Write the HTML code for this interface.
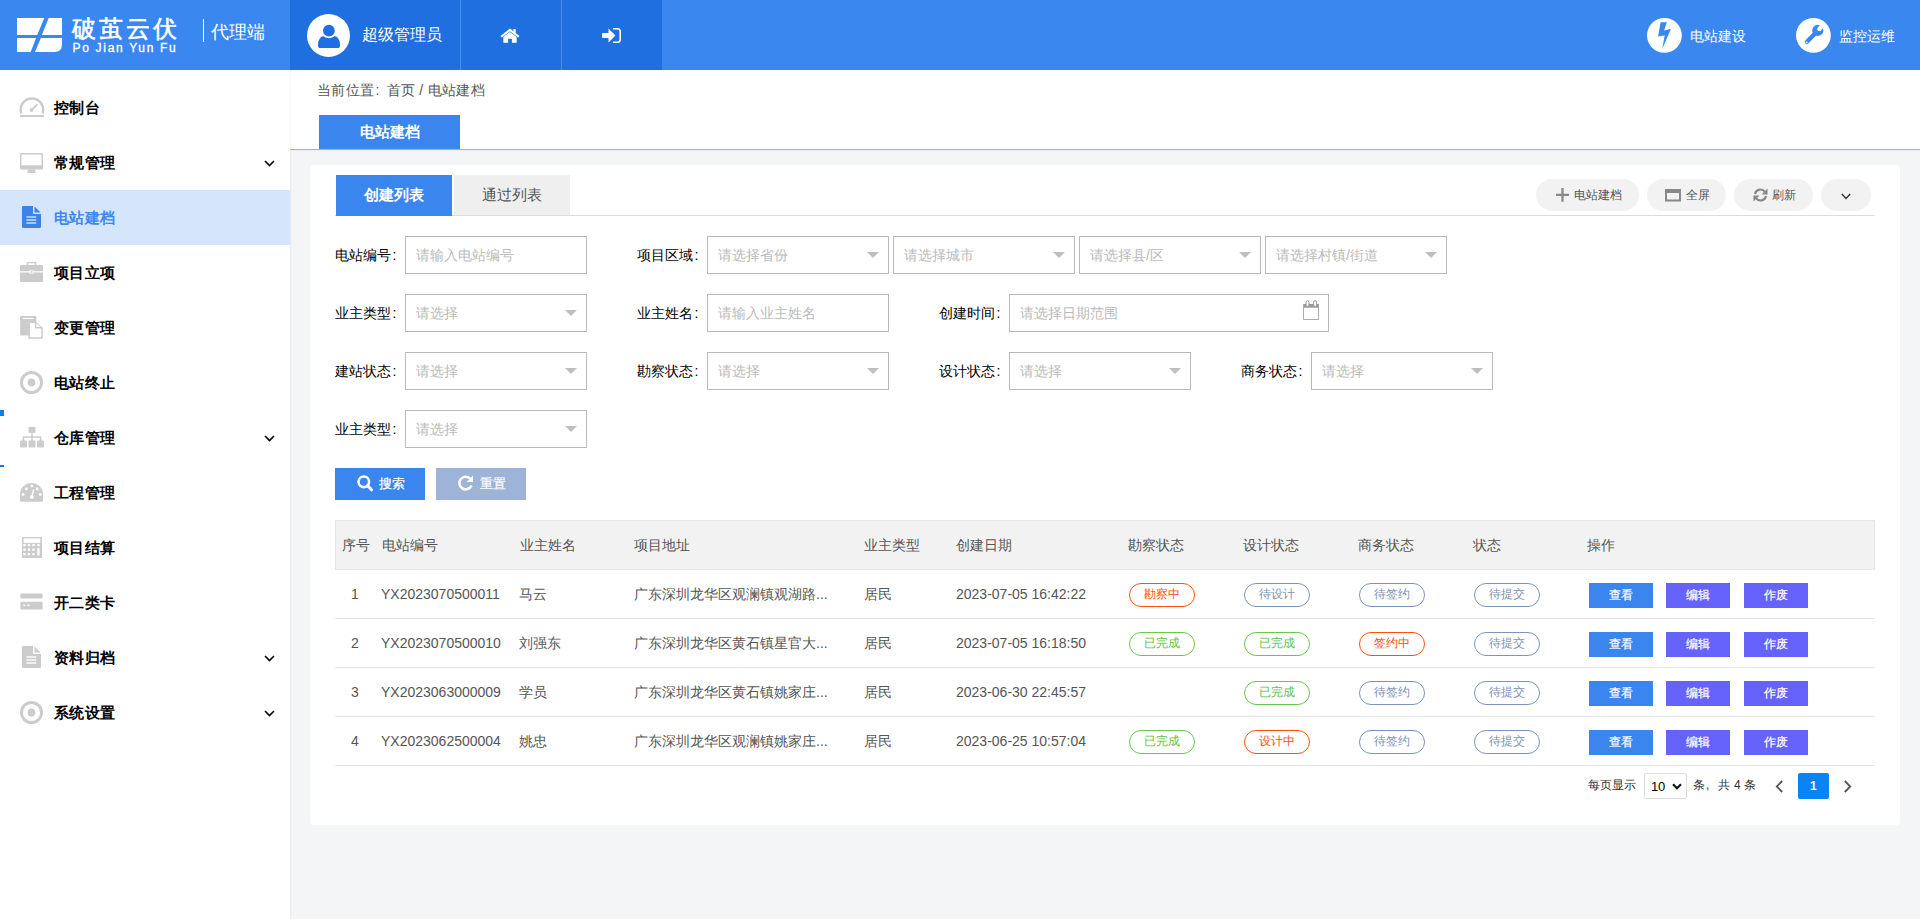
<!DOCTYPE html>
<html><head><meta charset="utf-8">
<style>
*{margin:0;padding:0;box-sizing:border-box}
html,body{width:1920px;height:919px;overflow:hidden;background:#f4f5f7;font-family:"Liberation Sans",sans-serif;font-size:14px;color:#333}
.a{position:absolute}
.t{position:absolute;white-space:nowrap;line-height:1}
/* header */
#hdr{left:0;top:0;width:1920px;height:70px;background:#3a88ef}
#usr{left:290px;top:0;width:372px;height:70px;background:#1f6fe0}
.sep{top:0;width:1px;height:70px;background:#4a8ae8}
/* sidebar */
#side{left:0;top:70px;width:290px;height:849px;background:#fff;border-right:none}
.mi{position:absolute;left:53.5px;font-size:15px;font-weight:bold;color:#000;line-height:1;white-space:nowrap;letter-spacing:0.6px}
.chev{position:absolute;left:264px;width:8px;height:8px;border-right:2px solid #333;border-bottom:2px solid #333;transform:rotate(45deg)}
/* main top */
#top{left:290px;top:70px;width:1630px;height:80px;background:#fff;border-bottom:1px solid #8cb8f0}
#card{left:310px;top:165px;width:1590px;height:660px;background:#fff;border-radius:4px}
.lbl i{font-style:normal;margin-left:1.5px}
.lbl{position:absolute;font-size:14px;color:#000;line-height:1;white-space:nowrap}
.inp{position:absolute;height:38px;border:1px solid #b9b9b9;background:#fff}
.ph{position:absolute;left:10px;top:11px;font-size:14px;color:#bbb;line-height:1;white-space:nowrap}
.car{position:absolute;right:9px;top:15px;width:0;height:0;border-left:6.5px solid transparent;border-right:6.5px solid transparent;border-top:6.5px solid #bfbfbf}
.pill{position:absolute;top:179px;height:31.5px;border-radius:16px;background:#f2f2f2;font-size:13px;color:#555}
/* table */
.th{position:absolute;top:538px;font-size:14px;color:#555;line-height:1;white-space:nowrap}
.td{position:absolute;font-size:14px;color:#555;line-height:1;white-space:nowrap}
.rl{position:absolute;left:335px;width:1540px;height:1px;background:#e6e6e6}
.bdg{position:absolute;width:66px;height:24px;border:1px solid #7d95ba;border-radius:12px;font-size:12px;color:#7d93b6;text-align:center;line-height:21px}
.bdg.r{border-color:#ff4f0a;color:#ff4f0a}
.bdg.g{border-color:#67c84a;color:#62c244}
.btn{position:absolute;width:64px;height:25px;background:#6563fc;color:#fff;font-size:12px;text-align:center;line-height:25px;-webkit-text-stroke:0.2px #fff}
.btn.b{background:#3a86ee}
</style></head><body>
<div id="hdr" class="a"></div>
<div id="usr" class="a"></div>
<div class="a sep" style="left:460px"></div>
<div class="a sep" style="left:561px"></div>


<!-- logo -->
<svg class="a" style="left:17px;top:18px" width="45" height="34" viewBox="0 0 45 34">
<path d="M0 0H27.3L20.2 17H0Z M31.7 0H45V17H24.8Z M0 20.1H19L13.7 34H0Z M23.9 20.1H45V26.5Q45 34 37.5 34H18Z" fill="#fff"/>
</svg>
<div class="t" style="left:72px;top:17px;font-size:24px;color:#fff;letter-spacing:3px;-webkit-text-stroke:0.6px #fff">破茧云伏</div>
<div class="t" style="left:72.5px;top:42px;font-size:12px;color:#fff;letter-spacing:1.7px;-webkit-text-stroke:0.3px #fff">Po Jian Yun Fu</div>
<div class="a" style="left:203px;top:19px;width:1px;height:23px;background:#fff"></div>
<div class="t" style="left:210.5px;top:23.5px;font-size:17.6px;color:#fff">代理端</div>
<!-- user -->
<svg class="a" style="left:307px;top:14px" width="43" height="43" viewBox="0 0 43 43">
<circle cx="21.5" cy="21.5" r="21.5" fill="#fff"/>
<circle cx="21.9" cy="16.7" r="5.9" fill="#1f6fe0"/>
<path d="M16.5 22.2Q19 24.3 21.9 24.3Q24.8 24.3 27.3 22.2Q29 22 30.5 23.5Q33 26.5 33 30V31.5Q33 34.1 30.5 34.1H13.5Q11 34.1 11 31.5V30Q11 26.5 13.5 23.5Q15 22 16.5 22.2Z" fill="#1f6fe0"/>
</svg>
<div class="t" style="left:362px;top:27px;font-size:16px;color:#fff">超级管理员</div>
<!-- home -->
<svg class="a" style="left:500px;top:27.7px" width="20" height="15.2" viewBox="0 0 21 17" preserveAspectRatio="none">
<path d="M10.5 0.5L0.5 9L2 10.5L10.5 3.5L19 10.5L20.5 9L16.5 5.6V1H14V3.5Z" fill="#fff"/>
<path d="M3.5 10L10.5 4.5L17.5 10V16.5H12.5V12H8.5V16.5H3.5Z" fill="#fff"/>
</svg>
<!-- sign in -->
<svg class="a" style="left:602px;top:27.9px" width="19" height="15" viewBox="0 0 19 15">
<path d="M1 5Q0 5 0 6V9Q0 10 1 10H6.5V14.5L13.5 7.5L6.5 0.5V5Z" fill="#fff"/>
<path d="M11 0.8H15.5Q18.2 0.8 18.2 3.5V11.5Q18.2 14.2 15.5 14.2H11" fill="none" stroke="#fff" stroke-width="1.6"/>
</svg>
<!-- right icons -->
<svg class="a" style="left:1647px;top:18px" width="35" height="35" viewBox="0 0 35 35">
<circle cx="17.4" cy="17.4" r="17.4" fill="#fff"/>
<path d="M13.6 4.2H19.9L17.1 12.6L23.9 11.1L15.2 31.1L17.7 17.6L11.1 18.6Z" fill="#3a88ef"/>
</svg>
<div class="t" style="left:1689.5px;top:29px;font-size:14px;color:#fff">电站建设</div>
<svg class="a" style="left:1796px;top:18px" width="35" height="35" viewBox="0 0 35 35">
<circle cx="17.4" cy="17.4" r="17.4" fill="#fff"/>
<circle cx="21.8" cy="12.4" r="5.6" fill="#3a88ef"/>
<path d="M20 14.5L11 23.8" stroke="#3a88ef" stroke-width="4.4" stroke-linecap="round"/>
<circle cx="23.4" cy="10.9" r="2.2" fill="#fff"/>
<path d="M22 9.5L25.5 5L29 8.5L24.8 12.3Z" fill="#fff"/>
<circle cx="10.7" cy="24.3" r="0.9" fill="#fff"/>
</svg>
<div class="t" style="left:1839px;top:29px;font-size:14px;color:#fff">监控运维</div>
<div id="side" class="a"></div>
<div class="a" style="left:290px;top:70px;width:1px;height:849px;background:#ebecef"></div>
<div class="a" style="left:291px;top:70px;width:1px;height:849px;background:#f0f1f4"></div>


<!-- sidebar -->
<div class="a" style="left:0;top:190px;width:290px;height:55px;background:#d5e5fb"></div>
<div class="a" style="left:0;top:410px;width:4px;height:6px;background:#0a7cf0"></div>
<div class="a" style="left:0;top:465px;width:4px;height:2px;background:#0a7cf0"></div>
<svg class="a" style="left:19px;top:96px" width="26" height="22" viewBox="0 0 26 22">
<path d="M2.3 17.5A11.25 11.25 0 1 1 23.5 17.5" fill="none" stroke="#cccccc" stroke-width="2.5"/>
<rect x="1" y="19" width="24" height="2" fill="#cccccc"/>
<path d="M12.6 14L17.8 8.9" stroke="#cccccc" stroke-width="2" stroke-linecap="round"/>
<circle cx="12.6" cy="14" r="1.9" fill="#cccccc"/>
</svg>
<div class="mi" style="top:100px">控制台</div>
<svg class="a" style="left:20px;top:153px" width="23" height="20" viewBox="0 0 23 20">
<path d="M1 0H22Q23 0 23 1V15.5Q23 16.5 22 16.5H1Q0 16.5 0 15.5V1Q0 0 1 0Z" fill="#cccccc"/>
<rect x="1.5" y="1.5" width="20" height="10.8" fill="#fff"/>
<path d="M7.8 16.5H15.2L15.6 20H7.4Z" fill="#cccccc"/>
</svg>
<div class="mi" style="top:155px">常规管理</div>
<svg class="a" style="left:264px;top:160px" width="11" height="7" viewBox="0 0 11 7"><path d="M1 1L5.5 5.5L10 1" fill="none" stroke="#000" stroke-width="1.6"/></svg>

<svg class="a" style="left:22px;top:206px" width="19" height="22" viewBox="0 0 19 22">
<path d="M1.2 0H11V6.7Q11 7.9 12.2 7.9H19V20.8Q19 22 17.8 22H1.2Q0 22 0 20.8V1.2Q0 0 1.2 0Z" fill="#3b82ea"/>
<path d="M12.5 0.4L18.6 6.5H12.5Z" fill="#3b82ea"/>
<rect x="4.4" y="10.3" width="9.8" height="1.4" fill="#d5e5fb"/>
<rect x="4.4" y="13.3" width="9.8" height="1.4" fill="#d5e5fb"/>
<rect x="4.4" y="16.3" width="9.8" height="1.4" fill="#d5e5fb"/>
</svg>

<div class="mi" style="top:210px;color:#3e88f0">电站建档</div>
<svg class="a" style="left:20px;top:262px" width="23" height="20" viewBox="0 0 23 20">
<path d="M7.5 3.5V1.2Q7.5 0.5 8.2 0.5H14.8Q15.5 0.5 15.5 1.2V3.5" fill="none" stroke="#cccccc" stroke-width="1.6"/>
<path d="M1 3H22Q23 3 23 4V9.2H0V4Q0 3 1 3Z" fill="#cccccc"/>
<path d="M0 10.6H23V19Q23 20 22 20H1Q0 20 0 19Z" fill="#cccccc"/>
<rect x="9.5" y="8.4" width="4" height="3.2" fill="#fff"/>
<rect x="10.5" y="9.3" width="2" height="1.4" fill="#cccccc"/>
</svg>
<div class="mi" style="top:265px">项目立项</div>
<svg class="a" style="left:16px;top:312px" width="32" height="30" viewBox="0 0 32 30">
<rect x="4.1" y="3.9" width="16.2" height="19.6" rx="0.8" fill="#cccccc"/>
<rect x="6.9" y="5.9" width="10.4" height="1.1" fill="#fff"/>
<path d="M12.4 9.5H19.8L26.8 15.7V26.8H12.4Z" fill="#cccccc"/>
<path d="M13.9 11H18.9V16.6H25.3V25.3H13.9Z" fill="#fff"/>
<path d="M20.3 11.4L24.8 15.1H20.3Z" fill="#fff"/>
</svg>
<div class="mi" style="top:320px">变更管理</div>
<svg class="a" style="left:20px;top:371px" width="23" height="23" viewBox="0 0 23 23">
<circle cx="11.5" cy="11.5" r="10.05" fill="none" stroke="#cccccc" stroke-width="2.9"/>
<circle cx="11.5" cy="11.5" r="3.9" fill="#cccccc"/>
</svg>

<div class="mi" style="top:375px">电站终止</div>
<svg class="a" style="left:20px;top:427px" width="24" height="21" viewBox="0 0 24 21">
<rect x="8.5" y="0" width="7" height="6" rx="1" fill="#cccccc"/>
<path d="M12 6V10M3.5 14V10H20.5V14M12 10V14" fill="none" stroke="#cccccc" stroke-width="1.5"/>
<rect x="0" y="13.5" width="7" height="7" rx="1" fill="#cccccc"/>
<rect x="8.5" y="13.5" width="7" height="7" rx="1" fill="#cccccc"/>
<rect x="17" y="13.5" width="7" height="7" rx="1" fill="#cccccc"/>
</svg>
<div class="mi" style="top:430px">仓库管理</div>
<svg class="a" style="left:264px;top:435px" width="11" height="7" viewBox="0 0 11 7"><path d="M1 1L5.5 5.5L10 1" fill="none" stroke="#000" stroke-width="1.6"/></svg>

<svg class="a" style="left:20px;top:483px" width="23" height="19" viewBox="0 0 23 19">
<path d="M0 11.5A11.5 11.5 0 0 1 23 11.5V17.5Q23 18.7 21.8 18.7H1.2Q0 18.7 0 17.5Z" fill="#cccccc"/>
<circle cx="3.1" cy="11.5" r="1.4" fill="#fff"/>
<circle cx="6.4" cy="6" r="1.4" fill="#fff"/>
<circle cx="11.8" cy="2.95" r="1.4" fill="#fff"/>
<circle cx="17.1" cy="6" r="1.4" fill="#fff"/>
<circle cx="20.2" cy="11.5" r="1.4" fill="#fff"/>
<circle cx="11.8" cy="14" r="2" fill="#fff"/>
<path d="M11.8 14L13.5 6.9" stroke="#fff" stroke-width="1.4" stroke-linecap="round"/>
</svg>
<div class="mi" style="top:485px">工程管理</div>
<svg class="a" style="left:21.5px;top:536.5px" width="20" height="21.5" viewBox="0 0 20 21.5">
<rect x="0" y="0" width="20" height="21.5" rx="1" fill="#cccccc"/>
<rect x="1.6" y="1.3" width="16.7" height="4.6" fill="#fff"/>
<g fill="#fff">
<rect x="1.3" y="6.9" width="2.3" height="2.3"/><rect x="5.8" y="6.9" width="2.3" height="2.3"/><rect x="10.4" y="6.9" width="2.3" height="2.3"/><rect x="15.3" y="6.9" width="2.3" height="2.3"/>
<rect x="1.3" y="11.5" width="2.3" height="2.3"/><rect x="5.8" y="11.5" width="2.3" height="2.3"/><rect x="10.4" y="11.5" width="2.3" height="2.3"/><rect x="15.3" y="11" width="2.3" height="7.5"/>
<rect x="1.3" y="16" width="2.3" height="2.3"/><rect x="5.8" y="16" width="2.3" height="2.3"/><rect x="10.4" y="16" width="2.3" height="2.3"/>
</g>
</svg>
<div class="mi" style="top:540px">项目结算</div>
<svg class="a" style="left:20px;top:593px" width="23" height="17" viewBox="0 0 23 17">
<rect x="0.4" y="0.6" width="22.2" height="4.9" rx="1" fill="#cccccc"/>
<rect x="0.4" y="8.7" width="22.2" height="7.9" rx="1" fill="#cccccc"/>
<rect x="3.1" y="11.7" width="2.3" height="1.2" fill="#fff"/>
<rect x="6.9" y="11.7" width="3.1" height="1.2" fill="#fff"/>
</svg>
<div class="mi" style="top:595px">开二类卡</div>
<svg class="a" style="left:22px;top:646px" width="19" height="22" viewBox="0 0 19 22">
<path d="M1.2 0H11V6.7Q11 7.9 12.2 7.9H19V20.8Q19 22 17.8 22H1.2Q0 22 0 20.8V1.2Q0 0 1.2 0Z" fill="#cccccc"/>
<path d="M12.5 0.4L18.6 6.5H12.5Z" fill="#cccccc"/>
<rect x="4.4" y="10.3" width="9.8" height="1.4" fill="#fff"/>
<rect x="4.4" y="13.3" width="9.8" height="1.4" fill="#fff"/>
<rect x="4.4" y="16.3" width="9.8" height="1.4" fill="#fff"/>
</svg>

<div class="mi" style="top:650px">资料归档</div>
<svg class="a" style="left:264px;top:655px" width="11" height="7" viewBox="0 0 11 7"><path d="M1 1L5.5 5.5L10 1" fill="none" stroke="#000" stroke-width="1.6"/></svg>

<svg class="a" style="left:20px;top:701px" width="23" height="23" viewBox="0 0 23 23">
<circle cx="11.5" cy="11.5" r="10.05" fill="none" stroke="#cccccc" stroke-width="2.9"/>
<circle cx="11.5" cy="11.5" r="3.9" fill="#cccccc"/>
</svg>

<div class="mi" style="top:705px">系统设置</div>
<svg class="a" style="left:264px;top:710px" width="11" height="7" viewBox="0 0 11 7"><path d="M1 1L5.5 5.5L10 1" fill="none" stroke="#000" stroke-width="1.6"/></svg>

<div id="top" class="a"></div>
<div class="a" style="left:290px;top:70px;width:2px;height:79px;background:linear-gradient(90deg,#f6f6f6,#fff)"></div>
<div class="a" style="left:290px;top:150px;width:1630px;height:1px;background:#ececea"></div>
<!-- breadcrumb -->
<div class="t" style="left:316.8px;top:83px;font-size:14px;color:#555;letter-spacing:0.5px">当前位置</div><div class="t" style="left:375.5px;top:83px;font-size:14px;color:#555">:</div><div class="t" style="left:386.5px;top:83px;font-size:14px;color:#555;letter-spacing:0.3px">首页 / 电站建档</div>
<div class="a" style="left:319px;top:115px;width:141px;height:34px;background:#3a86ee"></div>
<div class="t" style="left:360px;top:124px;font-size:15px;color:#fff;font-weight:bold">电站建档</div>

<div id="card" class="a"></div>
<!-- inner tabs -->
<div class="a" style="left:335px;top:215px;width:1540px;height:1px;background:#dcdcdc"></div>
<div class="a" style="left:336px;top:175px;width:116px;height:41px;background:#3a86ee"></div>
<div class="t" style="left:364px;top:187px;font-size:15px;color:#fff;font-weight:bold">创建列表</div>
<div class="a" style="left:454px;top:175px;width:116px;height:40px;background:#efefef"></div>
<div class="t" style="left:482px;top:187px;font-size:15px;color:#555">通过列表</div>
<!-- toolbar -->
<div class="pill" style="left:1536px;width:102.5px"></div>
<div class="pill" style="left:1647px;width:79px"></div>
<div class="pill" style="left:1734px;width:79px"></div>
<div class="pill" style="left:1821px;width:50px"></div>
<svg class="a" style="left:1555.5px;top:188.2px" width="13" height="13.7" viewBox="0 0 13 13.7"><path d="M5.35 0H7.65V5.7H13V8H7.65V13.7H5.35V8H0V5.7H5.35Z" fill="#888"/></svg>
<div class="t" style="left:1574px;top:189px;font-size:12.4px;color:#555">电站建档</div>
<svg class="a" style="left:1665px;top:189px" width="16" height="12.5" viewBox="0 0 16 12.5"><rect x="1" y="1" width="14" height="10.5" fill="none" stroke="#888" stroke-width="2"/><rect x="1" y="1" width="14" height="3" fill="#888"/></svg>
<div class="t" style="left:1685.5px;top:189px;font-size:12.4px;color:#555">全屏</div>
<svg class="a" style="left:1752.5px;top:188px" width="15" height="14" viewBox="0 0 15 14"><path d="M2 6A5.5 5.5 0 0 1 12 4" fill="none" stroke="#888" stroke-width="2.2"/><path d="M14.5 0.5V6.5H8.5Z" fill="#888"/><path d="M13 8A5.5 5.5 0 0 1 3 10" fill="none" stroke="#888" stroke-width="2.2"/><path d="M0.5 13.5V7.5H6.5Z" fill="#888"/></svg>
<div class="t" style="left:1772px;top:189px;font-size:12.4px;color:#555">刷新</div>
<svg class="a" style="left:1840.5px;top:192.5px" width="10" height="7" viewBox="0 0 10 7"><path d="M0.8 1L5 5.5L9.2 1" fill="none" stroke="#333" stroke-width="1.4"/></svg>
<!-- form -->
<div class="lbl" style="left:335px;top:248px">电站编号<i>:</i></div>
<div class="inp" style="left:405px;top:236px;width:182px"><div class="ph">请输入电站编号</div></div>

<div class="lbl" style="left:637px;top:248px">项目区域<i>:</i></div>
<div class="inp" style="left:707px;top:236px;width:182px"><div class="ph">请选择省份</div><div class="car"></div></div>
<div class="inp" style="left:893px;top:236px;width:182px"><div class="ph">请选择城市</div><div class="car"></div></div>
<div class="inp" style="left:1079px;top:236px;width:182px"><div class="ph">请选择县/区</div><div class="car"></div></div>
<div class="inp" style="left:1265px;top:236px;width:182px"><div class="ph">请选择村镇/街道</div><div class="car"></div></div>

<div class="lbl" style="left:335px;top:306px">业主类型<i>:</i></div>
<div class="inp" style="left:405px;top:294px;width:182px"><div class="ph">请选择</div><div class="car"></div></div>

<div class="lbl" style="left:637px;top:306px">业主姓名<i>:</i></div>
<div class="inp" style="left:707px;top:294px;width:182px"><div class="ph">请输入业主姓名</div></div>

<div class="lbl" style="left:939px;top:306px">创建时间<i>:</i></div>
<div class="inp" style="left:1009px;top:294px;width:320px"><div class="ph">请选择日期范围</div></div>

<svg class="a" style="left:1303px;top:300px" width="16" height="20" viewBox="0 0 16 20"><rect x="0.2" y="4" width="15.7" height="15.8" fill="#999"/><rect x="1" y="7.7" width="14.1" height="11.3" fill="#fff"/><rect x="3" y="0.7" width="3" height="5.8" rx="1.5" fill="#fff" stroke="#999" stroke-width="1"/><rect x="10.6" y="0.7" width="3" height="5.8" rx="1.5" fill="#fff" stroke="#999" stroke-width="1"/></svg>
<div class="lbl" style="left:335px;top:364px">建站状态<i>:</i></div>
<div class="inp" style="left:405px;top:352px;width:182px"><div class="ph">请选择</div><div class="car"></div></div>

<div class="lbl" style="left:637px;top:364px">勘察状态<i>:</i></div>
<div class="inp" style="left:707px;top:352px;width:182px"><div class="ph">请选择</div><div class="car"></div></div>

<div class="lbl" style="left:939px;top:364px">设计状态<i>:</i></div>
<div class="inp" style="left:1009px;top:352px;width:182px"><div class="ph">请选择</div><div class="car"></div></div>

<div class="lbl" style="left:1241px;top:364px">商务状态<i>:</i></div>
<div class="inp" style="left:1311px;top:352px;width:182px"><div class="ph">请选择</div><div class="car"></div></div>

<div class="lbl" style="left:335px;top:422px">业主类型<i>:</i></div>
<div class="inp" style="left:405px;top:410px;width:182px"><div class="ph">请选择</div><div class="car"></div></div>

<!-- buttons -->
<div class="a" style="left:335px;top:468px;width:90px;height:32px;background:#3a86ee"></div>
<svg class="a" style="left:357px;top:475px" width="16" height="17" viewBox="0 0 16 17"><circle cx="6.8" cy="6.8" r="5.3" fill="none" stroke="#fff" stroke-width="2.6"/><path d="M10.5 10.5L14.5 14.8" stroke="#fff" stroke-width="3" stroke-linecap="round"/></svg>
<div class="t" style="left:379px;top:477px;font-size:13px;color:#fff;-webkit-text-stroke:0.2px #fff">搜索</div>
<div class="a" style="left:436px;top:468px;width:90px;height:32px;background:#9db3d8"></div>
<svg class="a" style="left:457px;top:475px" width="17" height="17" viewBox="0 0 17 17"><path d="M13.5 4A6.3 6.3 0 1 0 14.5 10.5" fill="none" stroke="#fff" stroke-width="2.6"/><path d="M16 0.5V7H9.5Z" fill="#fff"/></svg>
<div class="t" style="left:480px;top:477px;font-size:13px;color:#fff;-webkit-text-stroke:0.2px #fff">重置</div>

<div class="a" style="left:335px;top:520px;width:1540px;height:50px;background:#f2f2f2;border:1px solid #e6e6e6"></div>
<div class="th" style="left:342px">序号</div>
<div class="th" style="left:382px">电站编号</div>
<div class="th" style="left:520px">业主姓名</div>
<div class="th" style="left:634px">项目地址</div>
<div class="th" style="left:864px">业主类型</div>
<div class="th" style="left:956px">创建日期</div>
<div class="th" style="left:1128px">勘察状态</div>
<div class="th" style="left:1243px">设计状态</div>
<div class="th" style="left:1358px">商务状态</div>
<div class="th" style="left:1473px">状态</div>
<div class="th" style="left:1587px">操作</div>
<div class="td" style="left:351px;top:587px">1</div>
<div class="td" style="left:381px;top:587px">YX2023070500011</div>
<div class="td" style="left:519px;top:587px">马云</div>
<div class="td" style="left:634px;top:587px">广东深圳龙华区观澜镇观湖路...</div>
<div class="td" style="left:864px;top:587px">居民</div>
<div class="td" style="left:956px;top:587px">2023-07-05 16:42:22</div>
<div class="bdg r" style="left:1129px;top:583px">勘察中</div>
<div class="bdg " style="left:1244px;top:583px">待设计</div>
<div class="bdg " style="left:1359px;top:583px">待签约</div>
<div class="bdg " style="left:1474px;top:583px">待提交</div>
<div class="btn b" style="left:1589px;top:583px">查看</div>
<div class="btn" style="left:1666px;top:583px">编辑</div>
<div class="btn" style="left:1744px;top:583px">作废</div>
<div class="rl" style="top:618px"></div>
<div class="td" style="left:351px;top:636px">2</div>
<div class="td" style="left:381px;top:636px">YX2023070500010</div>
<div class="td" style="left:519px;top:636px">刘强东</div>
<div class="td" style="left:634px;top:636px">广东深圳龙华区黄石镇星官大...</div>
<div class="td" style="left:864px;top:636px">居民</div>
<div class="td" style="left:956px;top:636px">2023-07-05 16:18:50</div>
<div class="bdg g" style="left:1129px;top:632px">已完成</div>
<div class="bdg g" style="left:1244px;top:632px">已完成</div>
<div class="bdg r" style="left:1359px;top:632px">签约中</div>
<div class="bdg " style="left:1474px;top:632px">待提交</div>
<div class="btn b" style="left:1589px;top:632px">查看</div>
<div class="btn" style="left:1666px;top:632px">编辑</div>
<div class="btn" style="left:1744px;top:632px">作废</div>
<div class="rl" style="top:667px"></div>
<div class="td" style="left:351px;top:685px">3</div>
<div class="td" style="left:381px;top:685px">YX2023063000009</div>
<div class="td" style="left:519px;top:685px">学员</div>
<div class="td" style="left:634px;top:685px">广东深圳龙华区黄石镇姚家庄...</div>
<div class="td" style="left:864px;top:685px">居民</div>
<div class="td" style="left:956px;top:685px">2023-06-30 22:45:57</div>
<div class="bdg g" style="left:1244px;top:681px">已完成</div>
<div class="bdg " style="left:1359px;top:681px">待签约</div>
<div class="bdg " style="left:1474px;top:681px">待提交</div>
<div class="btn b" style="left:1589px;top:681px">查看</div>
<div class="btn" style="left:1666px;top:681px">编辑</div>
<div class="btn" style="left:1744px;top:681px">作废</div>
<div class="rl" style="top:716px"></div>
<div class="td" style="left:351px;top:734px">4</div>
<div class="td" style="left:381px;top:734px">YX2023062500004</div>
<div class="td" style="left:519px;top:734px">姚忠</div>
<div class="td" style="left:634px;top:734px">广东深圳龙华区观澜镇姚家庄...</div>
<div class="td" style="left:864px;top:734px">居民</div>
<div class="td" style="left:956px;top:734px">2023-06-25 10:57:04</div>
<div class="bdg g" style="left:1129px;top:730px">已完成</div>
<div class="bdg r" style="left:1244px;top:730px">设计中</div>
<div class="bdg " style="left:1359px;top:730px">待签约</div>
<div class="bdg " style="left:1474px;top:730px">待提交</div>
<div class="btn b" style="left:1589px;top:730px">查看</div>
<div class="btn" style="left:1666px;top:730px">编辑</div>
<div class="btn" style="left:1744px;top:730px">作废</div>
<div class="rl" style="top:765px"></div>

<!-- pagination -->
<div class="t" style="left:1588px;top:779px;font-size:12px;color:#333">每页显示</div>
<div class="a" style="left:1643.5px;top:773px;width:43.5px;height:25.5px;border:1px solid #ddd;border-radius:2px;background:#fff"></div>
<div class="t" style="left:1651px;top:780px;font-size:13px;color:#000;letter-spacing:-0.2px">10</div>
<svg class="a" style="left:1672px;top:783px" width="10" height="7" viewBox="0 0 10 7"><path d="M1 1.2L5 5.2L9 1.2" fill="none" stroke="#111" stroke-width="2.1"/></svg>
<div class="t" style="left:1693px;top:779px;font-size:12px;color:#333">条</div>
<div class="t" style="left:1706px;top:779px;font-size:12px;color:#333">,</div>
<div class="t" style="left:1718px;top:779px;font-size:12px;color:#333">共</div>
<div class="t" style="left:1734px;top:779px;font-size:12px;color:#333">4</div>
<div class="t" style="left:1744px;top:779px;font-size:12px;color:#333">条</div>
<svg class="a" style="left:1775px;top:779.5px" width="9" height="13" viewBox="0 0 9 13"><path d="M7.2 1L1.8 6.5L7.2 12" fill="none" stroke="#555" stroke-width="1.8"/></svg>
<div class="a" style="left:1798px;top:773px;width:31px;height:25.5px;background:#0a84f5;border-radius:2px"></div>
<div class="t" style="left:1810px;top:780px;font-size:12px;color:#fff;font-weight:bold">1</div>
<svg class="a" style="left:1843px;top:779.5px" width="9" height="13" viewBox="0 0 9 13"><path d="M1.8 1L7.2 6.5L1.8 12" fill="none" stroke="#555" stroke-width="1.8"/></svg>
</body></html>
